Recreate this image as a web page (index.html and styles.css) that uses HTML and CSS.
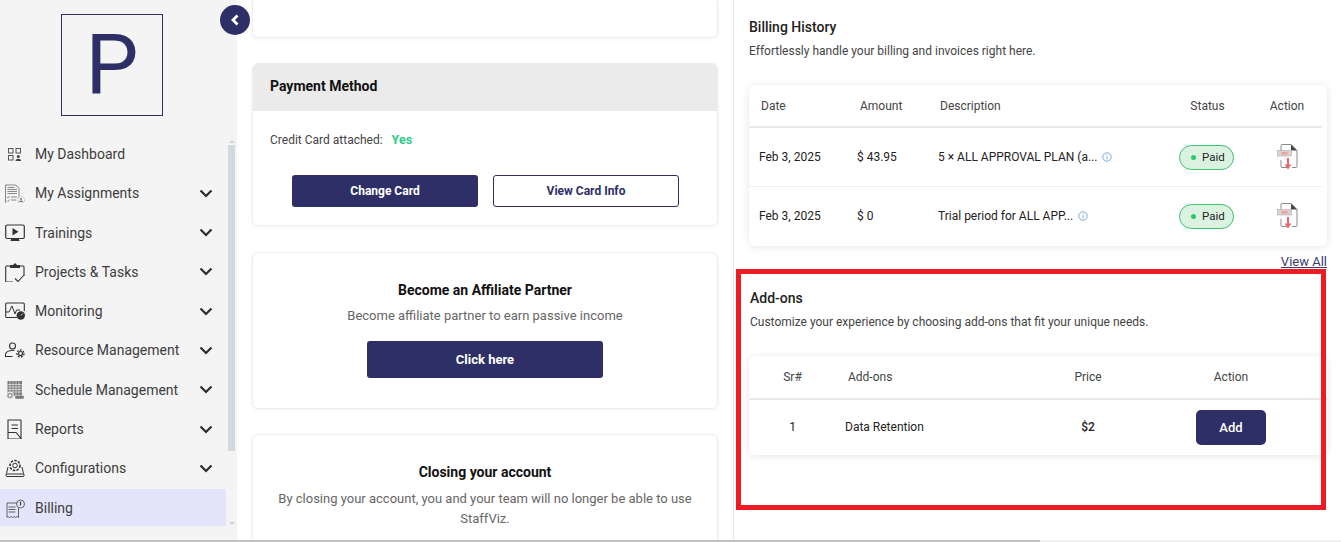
FILE: index.html
```html
<!DOCTYPE html>
<html lang="en">
<head>
<meta charset="utf-8">
<title>Billing</title>
<link rel="stylesheet" href="styles.css">
</head>
<body>
<svg class="defs" width="0" height="0">
  <defs>
    <symbol id="chev" viewBox="0 0 14 9"><path d="M1.500 1.500 7 7l5.500-5.500" fill="none" stroke="#2b2b33" stroke-width="2.200"/></symbol>
    <symbol id="pdf" viewBox="0 0 21 26">
      <path d="M4 8V1.500a1 1 0 0 1 1-1h9l6 6v16a1 1 0 0 1-1 1h-4M4 16v6.500a1 1 0 0 0 1 1h5" fill="none" stroke="#8b8b8b" stroke-width="1"/>
      <path d="M14 .5l6 6h-6z" fill="#444"/>
      <rect x=".5" y="6.500" width="14" height="5.500" fill="#d9d3d3" stroke="#b9a9a9" stroke-width=".6"/>
      <path d="M4.500 8h6v2.500h-6z" fill="#ef9d9d"/>
      <path d="M11 14v8" stroke="#e9686c" stroke-width="2"/>
      <path d="M7.500 20.500h7L11 25.500z" fill="#e9686c"/>
    </symbol>
    <symbol id="info" viewBox="0 0 10 10"><circle cx="5" cy="5" r="4.200" fill="none" stroke="#6aa5e0" stroke-width=".9"/><path d="M5 4.400v3M5 2.600v.9" stroke="#6aa5e0" stroke-width=".9"/></symbol>
  </defs>
</svg>
<div class="app">
  <div class="viewport">
    <aside class="sidebar">
      <div class="logo">P</div>
      <div class="nav-wrap">
        <nav class="nav">
          <a class="nav-item"><svg class="nav-icon" viewBox="0 0 20 20"><g fill="none" stroke="#555" stroke-width="1"><rect x="3.500" y="4.500" width="4.500" height="4.500"/><rect x="11" y="4.500" width="4.500" height="4.500"/><rect x="3.500" y="11.500" width="4.500" height="4.500"/></g><circle cx="13.300" cy="12.500" r="1.500" fill="#444"/><path d="M10.500 17c0-3 5.600-3 5.600 0z" fill="#444"/></svg><span class="nav-label">My Dashboard</span></a>
          <a class="nav-item"><svg class="nav-icon" viewBox="0 0 20 20"><g fill="none" stroke="#6d6d6d" stroke-width=".8"><path d="M.5 2h10.500l3 3.500V20.500H.5z"/><path d="M2.500 4.500h7M2.500 6.500h9.500M2.500 8.500h9.500M2.500 10.500h9.500M6 14h6M6 17h5"/><path d="M2 14l1 1 1.500-2M2 17.500l1 1 1.500-2"/><circle cx="16" cy="17" r="3.500" fill="#f4f4f4" stroke="#aaa" stroke-dasharray="1.500 .8"/></g><circle cx="16" cy="16" r="1" fill="#777"/><path d="M14 19c0-2 4-2 4 0z" fill="#777"/></svg><span class="nav-label">My Assignments</span><svg class="chev"><use href="#chev"/></svg></a>
          <a class="nav-item"><svg class="nav-icon" viewBox="0 0 20 20"><rect x=".7" y="2" width="18.600" height="13.500" rx="1.500" fill="none" stroke="#333" stroke-width="1.200"/><path d="M7.500 5l6 3.800-6 3.800z" fill="#333"/><path d="M6 15.500h8v1.500l1 .9H5l1-.9z" fill="#333"/></svg><span class="nav-label">Trainings</span><svg class="chev"><use href="#chev"/></svg></a>
          <a class="nav-item"><svg class="nav-icon" viewBox="0 0 20 20"><path d="M5 4H1.700a1 1 0 0 0-1 1v14a1 1 0 0 0 1 1h6.300M15 4h3a1 1 0 0 1 1 1v9" fill="none" stroke="#333" stroke-width="1.100"/><path d="M5 3h3l2-2 2 2h3v3H5z" fill="#333"/><path d="M10 16.500l3 3 6-6.500" fill="none" stroke="#333" stroke-width="1.100"/></svg><span class="nav-label">Projects &amp; Tasks</span><svg class="chev"><use href="#chev"/></svg></a>
          <a class="nav-item"><svg class="nav-icon" viewBox="0 0 20 20"><path d="M12 16.500H1.700a1 1 0 0 1-1-1V3a1 1 0 0 1 1-1h16.600a1 1 0 0 1 1 1v7" fill="none" stroke="#333" stroke-width="1.100"/><path d="M1 11h3l3-6 3 8 1.500-4H15" fill="none" stroke="#333" stroke-width="1"/><circle cx="15.800" cy="14.500" r="4.200" fill="#333"/><path d="M15.800 14.500l2-2" stroke="#fff" stroke-width=".8"/></svg><span class="nav-label">Monitoring</span><svg class="chev"><use href="#chev"/></svg></a>
          <a class="nav-item"><svg class="nav-icon" viewBox="0 0 20 20"><g fill="none" stroke="#333" stroke-width="1.100"><circle cx="7.500" cy="6" r="3"/><path d="M.5 13.800c1-2.500 4.500-3.500 9-3.500M.5 13.800v2.700h7"/><circle cx="15.500" cy="13.500" r="2"/><circle cx="15.500" cy="13.500" r="3.500" stroke-dasharray="1.800 1.300" stroke-width="1.400"/></g></svg><span class="nav-label">Resource Management</span><svg class="chev"><use href="#chev"/></svg></a>
          <a class="nav-item"><svg class="nav-icon" viewBox="0 0 20 20"><rect x="2.500" y="1" width="14.500" height="15" fill="#777"/><path d="M2.500 4.500h14.500M2.500 7h14.500M2.500 9.500h14.500M2.500 12h14.500M5 1v15M8 1v15M11 1v15M14 1v15" stroke="#e6e6e6" stroke-width=".7"/><circle cx="5" cy="15.500" r="3.400" fill="#999" stroke="#f4f4f4"/><circle cx="5" cy="15.500" r="1.300" fill="#f4f4f4"/><rect x="10" y="15.500" width="9" height="3.500" fill="#777" stroke="#f4f4f4" stroke-width=".5"/></svg><span class="nav-label">Schedule Management</span><svg class="chev"><use href="#chev"/></svg></a>
          <a class="nav-item"><svg class="nav-icon" viewBox="0 0 20 20"><path d="M3 1h12.500a.5.5 0 0 1 .5.500V20H3.500a.5.500 0 0 1-.5-.5zM3 13.500h8l5.500 6.500M6.500 6h6.500M6.500 9.500h6.500" fill="none" stroke="#333" stroke-width="1.100"/></svg><span class="nav-label">Reports</span><svg class="chev"><use href="#chev"/></svg></a>
          <a class="nav-item"><svg class="nav-icon" viewBox="0 0 20 20"><g fill="none" stroke="#333" stroke-width="1"><circle cx="10" cy="7.500" r="2.300"/><circle cx="10" cy="7.500" r="5" stroke-dasharray="2.500 1.200" stroke-width="1.600"/><path d="M3 9 1.500 15.500M17 9l1.500 6.500M1 16h18v1.500a1 1 0 0 1-1 1H2a1 1 0 0 1-1-1z"/></g></svg><span class="nav-label">Configurations</span><svg class="chev"><use href="#chev"/></svg></a>
          <a class="nav-item nav-item-active"><svg class="nav-icon" viewBox="0 0 20 20"><g fill="none" stroke="#444" stroke-width=".8"><path d="M13.500 10v9.500l-1.500-1-1.500 1-1.500-1-1.500 1-1.500-1-1.500 1-1.500-1-1 .8V5h10"/><path d="M3.500 9h7M3.500 11.500h7M3.500 14h7"/><circle cx="15.500" cy="6" r="4"/></g><path d="M15.500 3.500v4" stroke="#444" stroke-width="1.300"/></svg><span class="nav-label">Billing</span></a>
        </nav>
        <div class="side-scroll">
          <span class="arrow-up"></span>
          <span class="side-thumb"></span>
          <span class="arrow-down"></span>
        </div>
      </div>
    </aside>
    <button class="toggle" aria-label="Collapse"><svg viewBox="0 0 10 12" width="10" height="12"><path d="M7.500 1.500 3 6l4.500 4.500" fill="none" stroke="#fff" stroke-width="2.800"/></svg></button>
    <main class="left-col">
      <section class="card card-clip"></section>
      <section class="card card-pay">
        <h2 class="pay-head">Payment Method</h2>
        <div class="pay-body">
          <p class="pay-line">Credit Card attached: <b class="yes">Yes</b></p>
          <div class="pay-btns">
            <button class="btn btn-solid">Change Card</button>
            <button class="btn btn-line">View Card Info</button>
          </div>
        </div>
      </section>
      <section class="card card-aff">
        <h3 class="cta-title">Become an Affiliate Partner</h3>
        <p class="cta-text">Become affiliate partner to earn passive income</p>
        <button class="btn btn-solid btn-cta">Click here</button>
      </section>
      <section class="card card-close">
        <h3 class="cta-title">Closing your account</h3>
        <p class="cta-text cta-text-close">By closing your account, you and your team will no longer be able to use StaffViz.</p>
      </section>
    </main>
    <section class="right-col">
      <h2 class="sec-title">Billing History</h2>
      <p class="sec-text">Effortlessly handle your billing and invoices right here.</p>
      <div class="tbl tbl-bill">
        <div class="row bill-grid row-head">
          <span class="c-date-h">Date</span><span class="c-amt-h">Amount</span><span class="c-desc-h">Description</span><span class="center">Status</span><span class="center">Action</span>
        </div>
        <div class="row bill-grid row-bill row-line">
          <span>Feb 3, 2025</span><span>$ 43.95</span><span class="desc">5 × ALL APPROVAL PLAN (a... <svg class="info"><use href="#info"/></svg></span>
          <span class="center"><span class="paid"><i class="dot"></i>Paid</span></span><span class="center"><svg class="pdf"><use href="#pdf"/></svg></span>
        </div>
        <div class="row bill-grid row-bill row-last">
          <span>Feb 3, 2025</span><span>$ 0</span><span class="desc">Trial period for ALL APP... <svg class="info"><use href="#info"/></svg></span>
          <span class="center"><span class="paid"><i class="dot"></i>Paid</span></span><span class="center"><svg class="pdf"><use href="#pdf"/></svg></span>
        </div>
      </div>
      <div class="view-all"><a>View All</a></div>
      <div class="addons">
        <h2 class="sec-title">Add-ons</h2>
        <p class="sec-text">Customize your experience by choosing add-ons that fit your unique needs.</p>
      </div>
      <div class="tbl tbl-add">
        <div class="row add-grid add-head">
          <span class="center">Sr#</span><span class="add-name-h">Add-ons</span><span class="center">Price</span><span class="center">Action</span>
        </div>
        <div class="row add-grid add-row">
          <span class="center add-cell">1</span><span class="add-name add-cell">Data Retention</span><span class="center add-price add-cell">$2</span><span class="center"><button class="btn-add">Add</button></span>
        </div>
      </div>
      <div class="red-box"></div>
    </section>
  </div>
  <div class="hscroll"><span class="hthumb"></span></div>
</div>
</body>
</html>
```
FILE: styles.css
```css
* { box-sizing: border-box; }
html, body { margin: 0; height: 100%; overflow: hidden; }
body { font-family: Roboto, "Liberation Sans", sans-serif; color: #333; background: #fff; }
.defs { position: absolute; }
.app { display: flex; flex-direction: column; height: 542px; width: 1341px; }
.viewport { display: flex; flex: 1; min-height: 0; position: relative; overflow: hidden; }

/* sidebar */
.sidebar { width: 237px; flex: none; background: #f4f4f4; padding-top: 14px; }
.logo { width: 102px; height: 102px; margin-left: 61px; border: 1px solid #2d2f66; color: #2d2f66; font-size: 84px; line-height: 100px; text-align: center; }
.nav-wrap { display: flex; margin-top: 19px; }
.nav { width: 226px; display: flex; flex-direction: column; gap: 2.300px; padding-top: .5px; }
.nav-item { height: 37px; display: flex; align-items: center; padding-left: 5px; color: #3d3d3d; font-size: 14px; }
.nav-item-active { background: #e4e5fa; }
.nav-icon { width: 20px; height: 20px; flex: none; margin-right: 10px; }
.nav-label { flex: 1; white-space: nowrap; }
.chev { width: 14px; height: 9px; margin-right: 13px; flex: none; }
.side-scroll { width: 7px; margin-left: 2px; display: flex; flex-direction: column; align-items: center; height: 385px; margin-top: 5px; }
.side-thumb { width: 7px; height: 306px; background: #d3dadd; margin: 2px 0 auto; }
.arrow-up { border: 3px solid transparent; border-top: 0; border-bottom: 3px solid #ccd2d5; }
.arrow-down { border: 3px solid transparent; border-bottom: 0; border-top: 3px solid #ccd2d5; }
.toggle { position: absolute; left: 220px; top: 5px; width: 30px; height: 30px; padding: 0; border: 0; border-radius: 50%; background: #2d2f66; display: flex; align-items: center; justify-content: center; }

/* left column */
.left-col { width: 497px; flex: none; padding: 0 15px; border-right: 1px solid #e8e8e8; display: flex; flex-direction: column; gap: 26px; }
.card { width: 466px; flex: none; background: #fff; border: 1px solid #eeeeee; border-radius: 6px; box-shadow: 0 1px 4px rgba(0,0,0,.05); }
.card-clip { height: 38px; margin-bottom: -1px; border-top: 0; border-radius: 0 0 6px 6px; }
.card-pay { height: 163px; overflow: hidden; }
.pay-head { margin: 0; height: 47px; background: #ebebeb; padding-left: 17px; font-size: 14px; line-height: 45px; font-weight: 700; color: #111; }
.pay-body { padding: 20px 17px 0; }
.pay-line { margin: 0; font-size: 12px; line-height: 17px; color: #444; }
.yes { color: #2ecc88; font-size: 12.500px; margin-left: 6px; font-weight: 700; }
.pay-btns { display: flex; gap: 15px; margin: 26px 0 0 22px; }
.btn { width: 186px; height: 32px; border-radius: 3px; font: 700 12px Roboto, "Liberation Sans", sans-serif; }
.btn-solid { background: #2d2f66; color: #fff; border: 0; }
.btn-line { background: #fff; color: #2d2f66; border: 1px solid #2d2f66; }
.card-aff { height: 157px; margin-bottom: -1px; text-align: center; padding-top: 29px; }
.cta-title { margin: 0; font-size: 14px; line-height: 17px; font-weight: 700; color: #111; }
.cta-text { margin: 7px 0 0; font-size: 13px; line-height: 19px; color: #666; }
.cta-text-close { margin-top: 8px; line-height: 20px; }
.btn-cta { display: block; width: 236px; height: 37px; margin: 16px auto 0; font-size: 13px; border-radius: 3px; }
.card-close { height: 140px; text-align: center; padding: 29px 20px 0; }

/* right column */
.right-col { width: 607px; flex: none; padding: 19px 0 0 15px; position: relative; }
.sec-title { margin: 0; font-size: 14px; line-height: 17px; font-weight: 500; color: #222; }
.sec-text { margin: 7px 0 0; font-size: 12px; line-height: 16px; color: #444; }
.tbl { background: #fff; width: 578px; border-radius: 6px; box-shadow: 0 1px 8px rgba(0,0,0,.1); }
.tbl-bill { margin-top: 26px; height: 161px; }
.row { display: grid; align-items: center; font-size: 12px; color: #222; }
.bill-grid { grid-template-columns: 98px 79px 228px 87px 72px; padding-left: 10px; }
.row-head { height: 43px; border-bottom: 2px solid #e9e9e9; color: #444; margin-right: 5px; }
.c-date-h { padding-left: 2px; }
.c-amt-h { padding-left: 3px; }
.c-desc-h { padding-left: 4px; }
.row-bill { height: 59px; }
.row-last { height: 58px; }
.row-line { border-bottom: 1px solid #eeeeee; margin-right: 5px; }
.center { text-align: center; display: flex; justify-content: center; }
.desc { white-space: nowrap; padding-left: 2px; }
.info { width: 10px; height: 10px; margin-left: 2px; vertical-align: -1px; }
.paid { display: inline-flex; align-items: center; gap: 6px; width: 55px; height: 25px; padding-left: 11px; margin-right: 2px; border: 1px solid #3cc46c; border-radius: 13px; background: #dbf2e1; font-size: 11.500px; }
.dot { width: 5px; height: 5px; border-radius: 50%; background: #2ec866; }
.pdf { width: 21px; height: 26px; }
.view-all { text-align: right; width: 578px; margin-top: 8px; font-size: 13px; line-height: 15px; color: #3a3c6e; }
.view-all a { text-decoration: underline; }
.addons { margin: 21px 0 0 1px; }
.tbl-add { margin-top: 26px; height: 99px; }
.add-grid { grid-template-columns: 87px 200px 104px 182px; }
.add-head { height: 44px; border-bottom: 2px solid #e9e9e9; color: #444; }
.add-name-h { padding-left: 12px; }
.add-name { padding-left: 9px; }
.add-row { height: 55px; }
.add-cell { margin-top: -1px; }
.add-price { font-weight: 500; }
.btn-add { width: 70px; height: 35px; border: 0; border-radius: 5px; background: #2d2f66; color: #fff; font: 500 13px Roboto, "Liberation Sans", sans-serif; }
.red-box { position: absolute; left: 2px; top: 269px; width: 590px; height: 241px; border: 5px solid #ed1c24; pointer-events: none; }

/* page scrollbar */
.hscroll { height: 2px; background: #f1f1f1; flex: none; }
.hthumb { display: block; width: 1040px; height: 2px; background: #c1c1c1; }
```
